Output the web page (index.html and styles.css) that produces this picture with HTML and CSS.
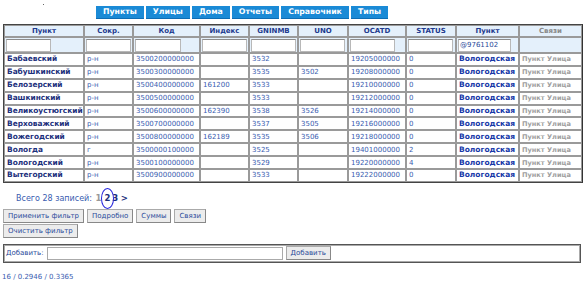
FILE: index.html
```html
<!DOCTYPE html>
<html>
<head>
<meta charset="utf-8">
<link rel="stylesheet" href="styles.css">
</head>
<body>
<div class="top">
  <span class="dot"></span>
  <nav class="tabs">
    <a class="tab">Пункты</a>
    <a class="tab">Улицы</a>
    <a class="tab">Дома</a>
    <a class="tab">Отчеты</a>
    <a class="tab">Справочник</a>
    <a class="tab">Типы</a>
  </nav>
</div>
<table class="grid">
  <colgroup>
    <col class="c1"><col class="c2"><col class="c3"><col class="c4"><col class="c5">
    <col class="c6"><col class="c7"><col class="c8"><col class="c9"><col class="c10">
  </colgroup>
  <thead>
    <tr class="head">
      <th>Пункт</th><th>Сокр.</th><th>Код</th><th>Индекс</th><th>GNINMB</th>
      <th>UNO</th><th>OCATD</th><th>STATUS</th><th>Пункт</th><th class="muted">Связи</th>
    </tr>
    <tr class="filter">
      <td><input class="f w45"></td><td><input class="f w45"></td><td><input class="f w46"></td>
      <td><input class="f w45"></td><td><input class="f w45"></td><td><input class="f w45"></td>
      <td><input class="f w45"></td><td><input class="f w45"></td>
      <td><input class="f w53" value="@9761102"></td><td></td>
    </tr>
  </thead>
  <tbody>
    <tr><td class="name">Бабаевский</td><td>р-н</td><td>3500200000000</td><td></td><td>3532</td><td></td><td>19205000000</td><td>0</td><td class="reg">Вологодская</td><td class="links">Пункт Улица</td></tr>
    <tr><td class="name">Бабушкинский</td><td>р-н</td><td>3500300000000</td><td></td><td>3535</td><td>3502</td><td>19208000000</td><td>0</td><td class="reg">Вологодская</td><td class="links">Пункт Улица</td></tr>
    <tr><td class="name">Белозерский</td><td>р-н</td><td>3500400000000</td><td>161200</td><td>3533</td><td></td><td>19210000000</td><td>0</td><td class="reg">Вологодская</td><td class="links">Пункт Улица</td></tr>
    <tr><td class="name">Вашкинский</td><td>р-н</td><td>3500500000000</td><td></td><td>3533</td><td></td><td>19212000000</td><td>0</td><td class="reg">Вологодская</td><td class="links">Пункт Улица</td></tr>
    <tr><td class="name">Великоустюгский</td><td>р-н</td><td>3500600000000</td><td>162390</td><td>3538</td><td>3526</td><td>19214000000</td><td>0</td><td class="reg">Вологодская</td><td class="links">Пункт Улица</td></tr>
    <tr><td class="name">Верховажский</td><td>р-н</td><td>3500700000000</td><td></td><td>3537</td><td>3505</td><td>19216000000</td><td>0</td><td class="reg">Вологодская</td><td class="links">Пункт Улица</td></tr>
    <tr><td class="name">Вожегодский</td><td>р-н</td><td>3500800000000</td><td>162189</td><td>3535</td><td>3506</td><td>19218000000</td><td>0</td><td class="reg">Вологодская</td><td class="links">Пункт Улица</td></tr>
    <tr><td class="name">Вологда</td><td>г</td><td>3500000100000</td><td></td><td>3525</td><td></td><td>19401000000</td><td>2</td><td class="reg">Вологодская</td><td class="links">Пункт Улица</td></tr>
    <tr><td class="name">Вологодский</td><td>р-н</td><td>3500100000000</td><td></td><td>3529</td><td></td><td>19220000000</td><td>4</td><td class="reg">Вологодская</td><td class="links">Пункт Улица</td></tr>
    <tr><td class="name">Вытегорский</td><td>р-н</td><td>3500900000000</td><td></td><td>3533</td><td></td><td>19222000000</td><td>0</td><td class="reg">Вологодская</td><td class="links">Пункт Улица</td></tr>
  </tbody>
</table>
<div class="pager">Всего 28 записей: <span class="pg cur">1</span><span class="pg sel">2</span><span class="pg">3</span> <span class="pg">&gt;</span></div>
<div class="buttons">
  <button class="btn">Применить фильтр</button>
  <button class="btn">Подробно</button>
  <button class="btn">Суммы</button>
  <button class="btn">Связи</button>
</div>
<div class="buttons">
  <button class="btn">Очистить фильтр</button>
</div>
<div class="addbox">
  <label class="addlabel">Добавить:</label>
  <input class="addinput">
  <button class="btn">Добавить</button>
</div>
<div class="stats">16 / 0.2946 / 0.3365</div>
</body>
</html>
```
FILE: styles.css
```css
body {
  margin: 0;
  padding: 0 3px;
  font-family: "DejaVu Sans", Verdana, sans-serif;
  font-size: 7px;
  color: #2a4a9a;
  background: #fff;
}
.top {
  height: 24px;
  display: flex;
  align-items: flex-start;
}
.dot {
  width: 1px;
  height: 1px;
  background: #666;
  margin: 4px 0 0 40px;
}
.tabs {
  display: flex;
  gap: 2px;
  margin: 6px 0 0 52px;
}
.tab {
  display: block;
  height: 12px;
  line-height: 12px;
  padding: 0 7px;
  background: #1a8ad6;
  color: #fff;
  font-weight: bold;
  font-size: 7.8px;
  border-bottom: 1px solid #0d6db4;
}
.grid {
  width: 578px;
  table-layout: fixed;
  border-collapse: separate;
  border-spacing: 0;
  border: 1px solid #444;
  border-right-color: #333;
}
.c1 { width: 80px; }
.c2 { width: 49px; }
.c3 { width: 67px; }
.c4 { width: 49px; }
.c5 { width: 49px; }
.c6 { width: 50px; }
.c7 { width: 58px; }
.c8 { width: 50px; }
.c9 { width: 63px; }
.c10 { width: 63px; }
.grid th, .grid td {
  border: 1px solid #9a9a9a;
  padding: 0 2px;
  white-space: nowrap;
  overflow: hidden;
  text-align: left;
}
.head th {
  background: #e4f0fb;
  color: #1e3a8e;
  font-weight: bold;
  text-align: center;
  height: 10px;
  line-height: 10px;
}
.head th.muted { color: #8a8a8a; }
.filter td {
  background: #e4f0fb;
  height: 14px;
  padding: 0 1px;
}
.f {
  display: block;
  box-sizing: border-box;
  height: 13px;
  border: 1px solid #b8b8b8;
  border-top-color: #8c8c8c;
  background: #fff;
  font: 7px "DejaVu Sans", sans-serif;
  color: #2a4a9a;
  padding: 0 1px;
  margin: 0;
}
.w45 { width: 45px; }
.w46 { width: 46px; }
.w53 { width: 53px; }
tbody td {
  height: 10.9px;
  line-height: 10px;
  color: #3a5db0;
}
tbody td.name {
  font-weight: bold;
  font-size: 7.4px;
  color: #1c2f7c;
}
tbody td.reg {
  font-weight: bold;
  color: #1638a8;
  font-size: 7.5px;
}
tbody td.links {
  font-weight: bold;
  color: #a0a0a0;
  font-size: 6.6px;
}
.pager {
  margin: 9px 0 0 13px;
  font-size: 8px;
  color: #3a5db0;
  height: 12px;
  line-height: 12px;
}
.pg {
  font-weight: bold;
  font-size: 8.5px;
  color: #1c2f7c;
}
.pg.cur { color: #999; margin: 0 2px 0 1px; }
.pg.sel {
  position: relative;
  margin: 0 2px 0 1px;
}
.pg.sel::after {
  content: "";
  position: absolute;
  left: -3px;
  top: -5px;
  width: 11px;
  height: 19px;
  border: 1px solid #2222dd;
  border-radius: 50%;
}
.buttons {
  display: flex;
  gap: 3px;
  margin-top: 1px;
}
.pager + .buttons { margin-top: 5px; }
.btn {
  font: 7px "DejaVu Sans", sans-serif;
  color: #2a4a9a;
  background: #ececec;
  border: 1px solid #aaa;
  border-right-color: #888;
  border-bottom-color: #888;
  height: 14px;
  padding: 0 4px;
  margin: 0;
}
.addbox {
  margin-top: 6px;
  display: flex;
  align-items: center;
  gap: 3px;
  height: 17px;
  border: 1px solid #555;
  outline: 1px solid #aaa;
  outline-offset: -2px;
  padding: 0 2px;
}
.addlabel {
  font-size: 7px;
  color: #2a4a9a;
}
.addinput {
  width: 236px;
  height: 13px;
  box-sizing: border-box;
  border: 1px solid #aaa;
  margin: 0;
  padding: 0;
}
.stats {
  margin: 10px 0 0 -1px;
  font-size: 7px;
  color: #3a5db0;
}
```
